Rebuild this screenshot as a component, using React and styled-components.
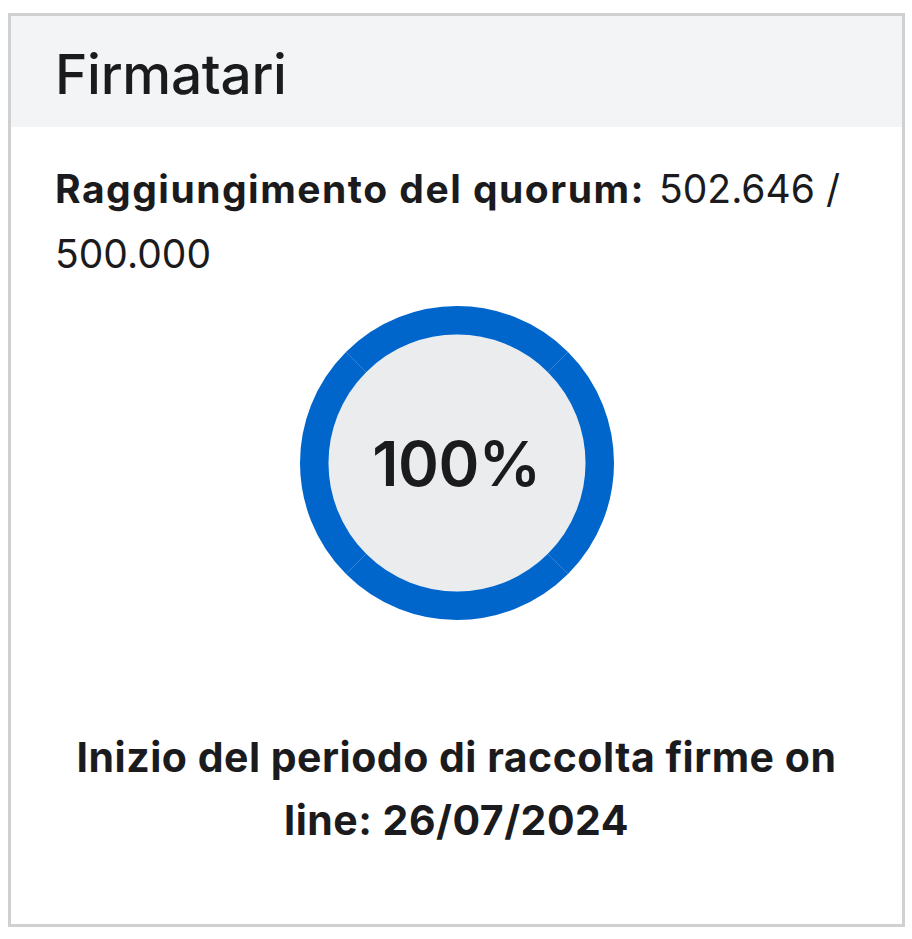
import React from 'react';
import styled, { createGlobalStyle } from 'styled-components';

const GlobalStyle = createGlobalStyle`
  html, body {
    margin: 0;
    padding: 0;
    background: #ffffff;
  }
  body {
    font-family: Inter, "Noto Sans", "Liberation Sans", sans-serif;
    color: #1b1b1d;
  }
`;

const Page = styled.div`
  padding: 13px 7px 12px 8px;
`;

const Card = styled.section`
  border: 3px solid #cfd0d2;
  background: #ffffff;
  display: flex;
  flex-direction: column;
`;

const Header = styled.header`
  background: #f3f4f6;
  height: 111px;
  display: flex;
  align-items: center;
  padding: 4px 44px 0;
  box-sizing: border-box;
`;

const Title = styled.h2`
  margin: 0;
  font-size: 55px;
  font-weight: 500;
  letter-spacing: -0.3px;
`;

const Body = styled.div`
  padding: 29px 44px 72px;
  display: flex;
  flex-direction: column;
`;

const Quorum = styled.p`
  margin: 0;
  font-size: 39px;
  line-height: 65px;
  font-weight: 400;
`;

const Label = styled.strong`
  font-weight: 700;
  letter-spacing: 1.5px;
  margin-right: 14px;
`;

const Value = styled.span`
  font-weight: 400;
`;

const ChartWrap = styled.div`
  position: relative;
  width: 314px;
  height: 314px;
  margin: 20px auto 0;
`;

const ChartLabel = styled.div`
  position: absolute;
  inset: 0;
  display: flex;
  align-items: center;
  justify-content: center;
  font-size: 62px;
  font-weight: 600;
  letter-spacing: -0.5px;
`;

const StartDate = styled.p`
  margin: 106px 0 0;
  text-align: center;
  font-size: 41px;
  line-height: 63px;
  font-weight: 700;
  letter-spacing: 0.5px;
`;

const Donut = ({ percent }) => {
  const size = 314;
  const c = size / 2;
  const r = 142.75;
  const arcs = [45, 135, 225, 315];
  const pt = (deg, rad) => [c + rad * Math.cos((deg * Math.PI) / 180), c + rad * Math.sin((deg * Math.PI) / 180)];
  return (
    <ChartWrap>
      <svg width={size} height={size} viewBox={`0 0 ${size} ${size}`}>
        <circle cx={c} cy={c} r={128.5} fill="#ebecee" />
        <circle cx={c} cy={c} r={r} fill="none" stroke="#0066cc" strokeWidth={28.5} />
        {arcs.map((a) => {
          const [x1, y1] = pt(a, 128.5);
          const [x2, y2] = pt(a, 157);
          return <line key={a} x1={x1} y1={y1} x2={x2} y2={y2} stroke="#5b93d6" strokeWidth={0.6} />;
        })}
      </svg>
      <ChartLabel>{percent}%</ChartLabel>
    </ChartWrap>
  );
};

const App = () => (
  <Page>
    <GlobalStyle />
    <Card>
      <Header>
        <Title>Firmatari</Title>
      </Header>
      <Body>
        <Quorum>
          <Label>Raggiungimento del quorum:</Label>
          <Value>502.646 / 500.000</Value>
        </Quorum>
        <Donut percent={100} />
        <StartDate>Inizio del periodo di raccolta firme on line: 26/07/2024</StartDate>
      </Body>
    </Card>
  </Page>
);

export default App;
